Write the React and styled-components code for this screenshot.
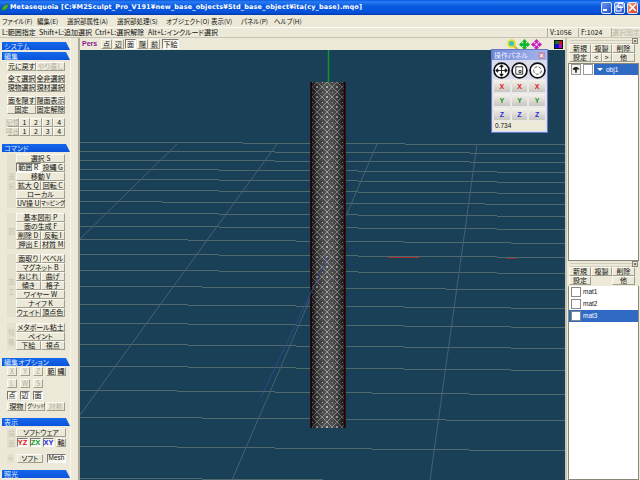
import React from 'react'
import styled, { createGlobalStyle } from 'styled-components'

const FONT = `"Noto Sans CJK JP", "Liberation Sans", sans-serif`

const GlobalStyle = createGlobalStyle`
  html, body { margin: 0; padding: 0; background: #ece9d8; }
  * { box-sizing: border-box; }
`

const MENU = ['ファイル(F)', '編集(E)', '選択部属性(A)', '選択部処理(S)', 'オブジェクト(O)', '表示(V)', 'パネル(P)', 'ヘルプ(H)']
const FLOOR_ROWS = [
  [142, 145], [151, 153.5], [160, 162.5], [169, 172.5], [179, 182.5], [190, 193.5], [201.5, 204.5],
  [213, 216.5], [226, 229.5], [239, 243.5], [254, 257.5], [270, 273.5], [286, 290], [304, 308.5],
  [323, 327.5], [344, 348.5], [366, 370.5], [390, 395], [417, 421], [446, 451], [478, 482],
]
const FLOOR_DIAGONALS = [
  [177, 144, 80, 239], [277, 144, 80, 415], [377, 144, 232, 480], [477, 144, 430, 480],
]
const ARROWS = 'M6 0l3 3H7.5v1.5H9V3l3 3-3 3V7.5H7.5V9H9l-3 3-3-3h1.5V7.5H3V9L0 6l3-3v1.5h1.5V3H3z'

const App = () => (
  <Screen>
    <GlobalStyle />
    <TitleBar>
      <AppIcon viewBox="0 0 12 12">
        <path d="M1 10 C2 4 6 1 11 1 C11 6 8 10 3 10 Z" fill="#4fae3a" stroke="#1c6a16" />
      </AppIcon>
      <TitleText>Metasequoia [C:¥M2Sculpt_Pro_V191¥new_base_objects¥Std_base_object¥ita(cy_base).mqo]</TitleText>
      <CaptionButton><svg width="9" height="9" viewBox="0 0 9 9"><rect x="1" y="6" width="4" height="2" fill="#fff" /></svg></CaptionButton>
      <CaptionButton><svg width="9" height="9" viewBox="0 0 9 9"><path d="M3 .5h5v4H3zM1 3h5v5H1z" fill="none" stroke="#fff" /></svg></CaptionButton>
      <CaptionButton $close><svg width="9" height="9" viewBox="0 0 9 9"><path d="M1 1l7 7M8 1l-7 7" stroke="#fff" strokeWidth="1.6" /></svg></CaptionButton>
    </TitleBar>

    <MenuBar>{MENU.map((m) => <span key={m}>{m}</span>)}</MenuBar>

    <InfoBar>
      <span>L:範囲指定</span>
      <span>Shift+L:追加選択</span>
      <span>Ctrl+L:選択解除</span>
      <span>Alt+L:インクルード選択</span>
      <Counters>
        <Counter $w={31}>V:1056</Counter>
        <Counter $w={33}>F:1024</Counter>
        <FixButton>選択固定</FixButton>
      </Counters>
    </InfoBar>

    <Main>
      <SideBar>
        <SideColumn>
          <Header>システム</Header>
          <Header $mt={2}>編集</Header>
          <Group $mt={2}>
            <Row><Btn>元に戻す</Btn><Btn $off>やり直し</Btn></Row>
          </Group>
          <Group $mt={3}>
            <Row><Btn>全て選択</Btn><Btn>全非選択</Btn></Row>
            <Row><Btn>現物選択</Btn><Btn>現材選択</Btn></Row>
          </Group>
          <Group $mt={4}>
            <Row><Btn>面を隠す</Btn><Btn>隠面表示</Btn></Row>
            <Row><Btn>固定</Btn><Btn>固定解除</Btn></Row>
          </Group>
          <Group $mt={4}>
            <NumRow>
              <Btn $off>記憶</Btn><Btn>1</Btn><Btn>2</Btn><Btn>3</Btn><Btn>4</Btn>
            </NumRow>
            <NumRow>
              <Btn $off>呼出</Btn><Btn>1</Btn><Btn>2</Btn><Btn>3</Btn><Btn>4</Btn>
            </NumRow>
          </Group>

          <Header $mt={8}>コマンド</Header>
          <Section $mt={2}>
            <Side>選<br />択</Side>
            <Stack>
              <Row><Btn>選択 S</Btn></Row>
              <Row><Btn $on>範囲 R</Btn><Btn>投縄 G</Btn></Row>
              <Row><Btn>移動 V</Btn></Row>
              <Row><Btn>拡大 Q</Btn><Btn>回転 C</Btn></Row>
              <Row><Btn>ローカル</Btn></Row>
              <Row><Btn>UV操 U</Btn><Btn $tiny>マッピング</Btn></Row>
            </Stack>
          </Section>
          <Section $mt={5}>
            <Side>図</Side>
            <Stack>
              <Row><Btn>基本図形 P</Btn></Row>
              <Row><Btn>面の生成 F</Btn></Row>
              <Row><Btn>削除 D</Btn><Btn>反転 I</Btn></Row>
              <Row><Btn>押出 E</Btn><Btn>材質 M</Btn></Row>
            </Stack>
          </Section>
          <Section $mt={5}>
            <Side>加<br />工</Side>
            <Stack>
              <Row><Btn>面取り</Btn><Btn>ベベル</Btn></Row>
              <Row><Btn>マグネット B</Btn></Row>
              <Row><Btn>ねじれ</Btn><Btn>曲げ</Btn></Row>
              <Row><Btn>傾き</Btn><Btn>格子</Btn></Row>
              <Row><Btn>ワイヤー W</Btn></Row>
              <Row><Btn>ナイフ K</Btn></Row>
              <Row><Btn>ウェイト</Btn><Btn>頂点色</Btn></Row>
            </Stack>
          </Section>
          <Section $mt={6}>
            <Side>特<br />殊</Side>
            <Stack>
              <Row><Btn>メタボール粘土</Btn></Row>
              <Row><Btn>ペイント</Btn></Row>
              <Row><Btn>下絵</Btn><Btn>視点</Btn></Row>
            </Stack>
          </Section>

          <Header $mt={8}>編集オプション</Header>
          <Options>
            <OptionRow>
              <Square $off>X</Square><Square $off>Y</Square><Square $off>Z</Square>
              <Square $joined>範</Square><Square $joined>縄</Square>
            </OptionRow>
            <OptionRow>
              <Square $off>L</Square><Square $off>W</Square><Square $off>S</Square>
            </OptionRow>
            <OptionRow>
              <Square $on>点</Square><Square $on>辺</Square><Square $on>面</Square>
            </OptionRow>
            <PairRow>
              <Btn>現物</Btn><Btn $tiny>グリッド</Btn><Btn $off>対称</Btn>
            </PairRow>
          </Options>

          <Header $mt={7}>表示</Header>
          <DisplayTop>
            <Side>描<br />画</Side>
            <Stack>
              <Row><Btn>ソフトウェア</Btn></Row>
              <AxisRow>
                <AxisBtn $c="#e0141c">YZ</AxisBtn>
                <AxisBtn $c="#129a2c">ZX</AxisBtn>
                <AxisBtn $c="#2424e0">XY</AxisBtn>
                <Square>軸</Square>
              </AxisRow>
            </Stack>
          </DisplayTop>
          <DisplayBottom>
            <Small>M</Small>
            <Btn>ソフト</Btn>
            <MeshBtn>Mesh</MeshBtn>
          </DisplayBottom>
          <Header $mt={7}>照光</Header>
        </SideColumn>
      </SideBar>

      <Center>
        <ViewBar>
          <PersLabel>Pers</PersLabel>
          <ViewBtn>点</ViewBtn>
          <ViewBtn>辺</ViewBtn>
          <ViewBtn $on>面</ViewBtn>
          <ViewBtn>隠</ViewBtn>
          <ViewBtn>前</ViewBtn>
          <ViewBtn $on $wide>下絵</ViewBtn>
          <ViewIcons>
            <svg width="11" height="11" viewBox="0 0 11 11">
              <circle cx="4.5" cy="4.5" r="3.4" fill="#39c0d0" stroke="#e0e020" strokeWidth="1.8" />
              <path d="M7 7l3.5 3.5" stroke="#d8b820" strokeWidth="2.2" />
            </svg>
            <svg width="11" height="11" viewBox="0 0 12 12"><path d={ARROWS} fill="#12b62a" /></svg>
            <svg width="11" height="11" viewBox="0 0 12 12">
              <path d={ARROWS} fill="#c81ec0" />
              <circle cx="6" cy="6" r="1.3" fill="#f0d8f0" />
            </svg>
            <Palette>
              <Cell $c="#0a7a2a" /><Cell $c="#d01010" /><Cell $c="#1010d8" /><Cell $c="#b010a0" />
            </Palette>
          </ViewIcons>
        </ViewBar>

        <Viewport>
          <Scene width="485" height="430" viewBox="80 50 485 430">
            <defs>
              <pattern id="lace" x="312" y="82" width="10" height="10" patternUnits="userSpaceOnUse">
                <rect width="10" height="10" fill="#282828" />
                <path d="M5 0L10 5L5 10L0 5Z" fill="none" stroke="#808080" strokeWidth="1" />
                <rect x="4" y="4" width="2" height="2" fill="#a0a0a0" />
                <rect x="0" y="0" width="1" height="1" fill="#a0a0a0" />
                <rect x="9" y="9" width="1" height="1" fill="#111" />
              </pattern>
              <linearGradient id="shine" x1="0" x2="1" y1="0" y2="0">
                <stop offset="0" stopColor="#000" stopOpacity=".4" />
                <stop offset=".5" stopColor="#fff" stopOpacity=".2" />
                <stop offset="1" stopColor="#000" stopOpacity=".4" />
              </linearGradient>
            </defs>
            <g shapeRendering="crispEdges">
              {FLOOR_ROWS.map(([a, b]) => (
                <line key={a} x1="80" y1={a} x2="565" y2={b} stroke="#50696a" />
              ))}
            </g>
            {FLOOR_DIAGONALS.map(([x1, y1, x2, y2]) => (
              <line key={x1} x1={x1} y1={y1} x2={x2} y2={y2} stroke="#42646c" />
            ))}
            <line x1="388" y1="257" x2="419" y2="257" stroke="#a82a2a" shapeRendering="crispEdges" />
            <line x1="506" y1="258" x2="517" y2="258" stroke="#8a2a3a" shapeRendering="crispEdges" />
            <line x1="328.5" y1="50" x2="328.5" y2="83" stroke="#0a9a2a" strokeWidth="1.4" />
            <rect x="310" y="82" width="36" height="346" fill="#120a0c" />
            <rect x="312" y="82" width="32" height="346" fill="url(#lace)" />
            <rect x="312" y="82" width="32" height="346" fill="url(#shine)" />
            <rect x="310" y="82" width="1" height="346" fill="#2c0a10" />
            <rect x="345" y="82" width="1" height="346" fill="#3c0a12" />
            <line x1="328" y1="257" x2="261" y2="397" stroke="#33488c" />
          </Scene>
        </Viewport>

        <OpPanel>
          <OpTitle>
            <span>操作パネル</span>
            <OpClose>×</OpClose>
          </OpTitle>
          <OpCircles>
            <OpCircle viewBox="0 0 16 16">
              <circle cx="8" cy="8" r="7" fill="#fff" stroke="#111" strokeWidth="1.6" />
              <path d="M8 3v10M3 8h10M8 2.5l-1.6 2h3.2zM8 13.5l-1.6-2h3.2zM2.5 8l2-1.6v3.2zM13.5 8l-2-1.6v3.2z" fill="#111" stroke="#111" strokeWidth=".8" />
            </OpCircle>
            <OpCircle viewBox="0 0 16 16">
              <circle cx="8" cy="8" r="7" fill="#fff" stroke="#111" strokeWidth="1.6" />
              <path d="M4.5 4.5h6.5v7h-6.5zM7.5 8h2v2h-2z" fill="none" stroke="#333" strokeWidth=".9" />
            </OpCircle>
            <OpCircle viewBox="0 0 16 16">
              <circle cx="8" cy="8" r="7" fill="#fff" stroke="#111" strokeWidth="1.6" />
              <circle cx="8" cy="8" r="3.6" fill="none" stroke="#555" strokeWidth=".9" strokeDasharray="3 1.4" />
            </OpCircle>
          </OpCircles>
          {[['X', '#e01818'], ['Y', '#189428'], ['Z', '#2a2ae0']].map(([axis, color]) => (
            <OpRow key={axis}>
              {[0, 1, 2].map((i) => <OpAxis key={i} $c={color}>{axis}</OpAxis>)}
            </OpRow>
          ))}
          <OpValue>0.734</OpValue>
        </OpPanel>
      </Center>

      <RightBar>
        <Grip><GripClose>×</GripClose></Grip>
        <RightButtons>
          <PanelBtn>新規</PanelBtn><PanelBtn>複製</PanelBtn><PanelBtn>削除</PanelBtn>
          <PanelBtn>設定</PanelBtn>
          <Arrows><PanelBtn>&lt;</PanelBtn><PanelBtn>&gt;</PanelBtn></Arrows>
          <PanelBtn>他</PanelBtn>
        </RightButtons>
        <ObjectList>
          <ObjectRow>
            <Eye viewBox="0 0 10 10">
              <path d="M1 4c2-3 6-3 8 0v1H6v4H4V6L1 5z" fill="#222" />
            </Eye>
            <Swatch />
            <ObjectName><Caret />obj1</ObjectName>
          </ObjectRow>
        </ObjectList>
        <Grip><GripClose>×</GripClose></Grip>
        <RightButtons>
          <PanelBtn>新規</PanelBtn><PanelBtn>複製</PanelBtn><PanelBtn>削除</PanelBtn>
          <PanelBtn>設定</PanelBtn>
          <PanelBtn $blank />
          <PanelBtn>他</PanelBtn>
        </RightButtons>
        <MaterialList>
          <MaterialRow><MatSwatch />mat1</MaterialRow>
          <MaterialRow><MatSwatch />mat2</MaterialRow>
          <MaterialRow $sel><MatSwatch />mat3</MaterialRow>
        </MaterialList>
      </RightBar>
    </Main>
  </Screen>
)

export default App

const raised = '#fbfaf4 #a09d8c #a09d8c #fbfaf4'
const sunken = '#777 #fff #fff #777'

const Screen = styled.div`
  width: 640px;
  height: 480px;
  overflow: hidden;
  display: flex;
  flex-direction: column;
  background: #ece9d8;
  font-family: ${FONT};
  font-feature-settings: "palt";
  color: #111;
`
const TitleBar = styled.div`
  height: 15px;
  flex: none;
  display: flex;
  align-items: center;
  padding: 0 2px 0 1px;
  gap: 2px;
  background: linear-gradient(#0a58e4 0%, #2a7cf2 12%, #0a5ae0 40%, #0450d8 85%, #0338a8 100%);
`
const AppIcon = styled.svg`
  width: 8px;
  height: 11px;
  margin-right: -1px;
  flex: none;
`
const TitleText = styled.div`
  flex: 1;
  color: #fff;
  font: bold 6.5px/15px "DejaVu Sans", sans-serif;
  letter-spacing: 0.15px;
  white-space: nowrap;
`
const CaptionButton = styled.div`
  width: 11px;
  height: 12px;
  flex: none;
  display: flex;
  align-items: center;
  justify-content: center;
  border: 1px solid #dce6f8;
  border-radius: 2px;
  background: ${(p) => (p.$close ? 'linear-gradient(135deg, #f0a080, #d83c10)' : 'linear-gradient(135deg, #6a94ee, #2450c8)')};
`
const MenuBar = styled.div`
  height: 12px;
  flex: none;
  display: grid;
  grid-template-columns: 35px 30px 50px 49px 45px 30px 33px auto;
  align-items: center;
  padding-left: 2px;
  font-size: 6.5px;
  line-height: 12px;
  white-space: nowrap;
`
const InfoBar = styled.div`
  height: 11px;
  flex: none;
  display: grid;
  grid-template-columns: 37px 56px 53px 1fr auto;
  align-items: center;
  padding-left: 2px;
  font-size: 7px;
  line-height: 9px;
  white-space: nowrap;
  border-top: 1px solid #fbfaf4;
  border-bottom: 1px solid #c8c5b4;
`
const Counters = styled.div`
  display: flex;
  align-items: stretch;
  height: 9px;
`
const Counter = styled.span`
  width: ${(p) => p.$w}px;
  padding-left: 2px;
  border-left: 1px solid #b0ad9c;
`
const FixButton = styled.span`
  width: 29px;
  color: #b8b5a4;
  text-align: center;
  border-left: 1px solid #b0ad9c;
`
const Main = styled.div`
  flex: 1;
  min-height: 0;
  display: flex;
`
const SideBar = styled.div`
  width: 80px;
  flex: none;
  border-right: 2px solid #aca899;
  overflow: hidden;
`
const SideColumn = styled.div`
  width: 71px;
  height: 100%;
  display: flex;
  flex-direction: column;
  padding: 4px 0 0 2px;
  border-right: 1px solid #f8f6ee;
`
const Header = styled.div`
  width: 68px;
  height: 8px;
  flex: none;
  margin-top: ${(p) => p.$mt || 0}px;
  padding-left: 2px;
  font-size: 7px;
  line-height: 8px;
  color: #dbe8ff;
  white-space: nowrap;
  background: linear-gradient(#1468ec, #0a54dc);
  clip-path: polygon(0 0, calc(100% - 4px) 0, 100% 100%, 0 100%);
`
const Group = styled.div`
  display: flex;
  flex-direction: column;
  margin: ${(p) => p.$mt}px 0 0 5px;
  width: 58px;
`
const Row = styled.div`
  display: flex;
  height: 9px;
  flex: none;
`
const NumRow = styled(Row)`
  & > * { flex: none; width: 9px; }
  & > *:first-child { width: 22px; }
`
const Btn = styled.div`
  flex: 1 1 0;
  min-width: 0;
  height: 9px;
  display: flex;
  align-items: center;
  justify-content: center;
  font-size: ${(p) => (p.$tiny ? '5.4px' : '7px')};
  line-height: 1;
  white-space: nowrap;
  color: ${(p) => (p.$off ? '#b0ad9c' : '#111')};
  background: ${(p) => (p.$on ? '#f8f6ee' : '#ece9d8')};
  border: 1px solid;
  border-color: ${(p) => (p.$on ? sunken : raised)};
`
const Section = styled.div`
  display: flex;
  margin: ${(p) => p.$mt}px 0 0 5px;
  width: 58px;
`
const Side = styled.div`
  width: 9px;
  flex: none;
  display: flex;
  flex-direction: column;
  align-items: center;
  justify-content: center;
  text-align: center;
  font-size: 6.5px;
  line-height: 10px;
  color: #c4c1b0;
  background: #e4e1d0;
  & > br { display: none; }
`
const Stack = styled.div`
  flex: 1;
  min-width: 0;
  display: flex;
  flex-direction: column;
`
const Options = styled.div`
  display: flex;
  flex-direction: column;
  margin: 1px 0 0 5px;
  width: 58px;
  gap: 3px;
`
const OptionRow = styled.div`
  display: flex;
  height: 9px;
  gap: 3px;
`
const PairRow = styled(Row)`
  margin-top: -1px;
  gap: 1px;
`
const Square = styled.div`
  width: 10px;
  height: 9px;
  flex: none;
  display: flex;
  align-items: center;
  justify-content: center;
  font-size: 7px;
  line-height: 1;
  margin-right: ${(p) => (p.$joined ? '-3px' : '0')};
  color: ${(p) => (p.$off ? '#b0ad9c' : '#111')};
  background: ${(p) => (p.$on ? '#f8f6ee' : '#ece9d8')};
  border: 1px solid;
  border-color: ${(p) => (p.$on ? sunken : raised)};
`
const DisplayTop = styled.div`
  display: flex;
  margin: 2px 0 0 5px;
  width: 59px;
`
const AxisRow = styled.div`
  display: flex;
  gap: 2px;
  height: 9px;
  margin: 1px 0 0 1px;
`
const AxisBtn = styled.div`
  width: 11px;
  height: 9px;
  flex: none;
  display: flex;
  align-items: center;
  justify-content: center;
  font: bold 7.5px/1 "Liberation Sans", sans-serif;
  color: ${(p) => p.$c};
  background: #f6f4ec;
  border: 1px solid;
  border-color: ${sunken};
`
const DisplayBottom = styled.div`
  display: flex;
  align-items: center;
  gap: 3px;
  margin: 6px 0 0 5px;
  width: 59px;
`
const Small = styled.div`
  width: 7px;
  height: 9px;
  flex: none;
  font-size: 5px;
  line-height: 9px;
  text-align: center;
  color: #c4c1b0;
  background: #e4e1d0;
`
const MeshBtn = styled.div`
  width: 19px;
  height: 9px;
  flex: none;
  display: flex;
  align-items: center;
  justify-content: center;
  margin-left: 1px;
  font: 6.5px/1 "Liberation Sans", sans-serif;
  background: #f8f6ee;
  border: 1px solid;
  border-color: ${sunken};
`
const Center = styled.div`
  flex: 1;
  min-width: 0;
  position: relative;
  display: flex;
  flex-direction: column;
`
const ViewBar = styled.div`
  height: 12px;
  flex: none;
  display: flex;
  align-items: center;
  padding-left: 2px;
  gap: 1px;
`
const PersLabel = styled.span`
  width: 18px;
  font: bold 7px/12px "Liberation Sans", sans-serif;
  color: #8a1a8a;
`
const ViewBtn = styled.div`
  width: ${(p) => (p.$wide ? '17px' : '11px')};
  margin-left: ${(p) => (p.$wide ? '1px' : '0')};
  height: 10px;
  flex: none;
  display: flex;
  align-items: center;
  justify-content: center;
  font-size: 7px;
  line-height: 1;
  white-space: nowrap;
  background: ${(p) => (p.$on ? '#f8f6ee' : '#ece9d8')};
  border: 1px solid;
  border-color: ${(p) => (p.$on ? sunken : raised)};
`
const ViewIcons = styled.div`
  margin-left: auto;
  margin-right: 2px;
  display: flex;
  align-items: center;
  gap: 1px;
`
const Palette = styled.div`
  width: 9px;
  height: 9px;
  margin-left: 11px;
  display: grid;
  grid-template-columns: 1fr 1fr;
  grid-template-rows: 1fr 1fr;
  border: 1px solid #111;
`
const Cell = styled.span`
  display: block;
  background: ${(p) => p.$c};
`
const Viewport = styled.div`
  flex: 1;
  background: #1a4058;
  overflow: hidden;
`
const Scene = styled.svg`
  display: block;
`
const OpPanel = styled.div`
  position: absolute;
  left: 411px;
  top: 11px;
  width: 57px;
  height: 84px;
  border: 1px solid #6878c8;
  background: #d8dcec;
  display: flex;
  flex-direction: column;
`
const OpTitle = styled.div`
  height: 10px;
  flex: none;
  display: flex;
  align-items: center;
  justify-content: space-between;
  padding: 0 2px;
  font-size: 7px;
  line-height: 10px;
  color: #f0f0ff;
  background: linear-gradient(90deg, #6f86d8, #a8b8ec);
`
const OpClose = styled.span`
  width: 7px;
  height: 7px;
  font: bold 7px/7px "Liberation Sans", sans-serif;
  text-align: center;
  color: #fff;
  background: #c090b0;
`
const OpCircles = styled.div`
  display: flex;
  justify-content: space-between;
  align-items: center;
  height: 19px;
  flex: none;
  padding: 1px 1px 0;
`
const OpCircle = styled.svg`
  width: 17px;
  height: 17px;
`
const OpRow = styled.div`
  display: grid;
  grid-template-columns: repeat(3, 1fr);
  height: 14px;
  flex: none;
  padding: 0 1px;
`
const OpAxis = styled.div`
  display: flex;
  align-items: center;
  justify-content: center;
  font: bold 7px/1 "Liberation Sans", sans-serif;
  color: ${(p) => p.$c};
  background: linear-gradient(#f4f2ea, #c8c6c0);
  border: 1px solid #e8e8e8;
`
const OpValue = styled.div`
  height: 10px;
  margin: 0 1px;
  padding-left: 2px;
  font: 6.5px/10px "Liberation Sans", sans-serif;
  background: #ece9d8;
`
const RightBar = styled.div`
  width: 75px;
  flex: none;
  display: flex;
  flex-direction: column;
  border-left: 2px solid #c8c5b4;
`
const Grip = styled.div`
  height: 6px;
  flex: none;
  position: relative;
  margin: 0 2px 0 3px;
  background: repeating-linear-gradient(#ece9d8 0 2px, #d0cdbc 2px 3px);
`
const GripClose = styled.span`
  position: absolute;
  right: 0;
  top: 0;
  width: 6px;
  height: 6px;
  font: 6px/5px "Liberation Sans", sans-serif;
  text-align: center;
  border: 1px solid #8a8778;
  background: #ece9d8;
`
const RightButtons = styled.div`
  display: grid;
  grid-template-columns: 22px 21px 23px;
  grid-auto-rows: 9px;
  margin: 0 0 1px 2px;
`
const Arrows = styled.div`
  display: grid;
  grid-template-columns: 1fr 1fr;
`
const PanelBtn = styled.div`
  display: flex;
  align-items: center;
  justify-content: center;
  font-size: 7px;
  line-height: 1;
  white-space: nowrap;
  background: #ece9d8;
  border: 1px solid;
  border-color: ${(p) => (p.$blank ? '#ece9d8' : raised)};
`
const ObjectList = styled.div`
  height: 198px;
  flex: none;
  margin: 0 1px;
  background: #fff;
  border: 1px solid #8a8778;
`
const ObjectRow = styled.div`
  display: flex;
  align-items: center;
  height: 11px;
  padding-left: 2px;
`
const Eye = styled.svg`
  width: 10px;
  height: 11px;
  flex: none;
  background: #f4f2ea;
  border: 1px solid #999;
`
const Swatch = styled.div`
  width: 10px;
  height: 11px;
  flex: none;
  margin: 0 1px 0 2px;
  background: #fff;
  border: 1px solid #999;
`
const ObjectName = styled.div`
  flex: 1;
  height: 11px;
  display: flex;
  align-items: center;
  gap: 3px;
  padding-left: 3px;
  color: #fff;
  font: 6.5px/11px "Liberation Sans", sans-serif;
  background: #316ac5;
`
const Caret = styled.span`
  width: 0;
  height: 0;
  border-left: 3px solid transparent;
  border-right: 3px solid transparent;
  border-top: 3px solid #fff;
`
const MaterialList = styled.div`
  flex: 1;
  margin: 0 1px;
  background: #fff;
  border: 1px solid #8a8778;
  border-top: none;
`
const MaterialRow = styled.div`
  display: flex;
  align-items: center;
  gap: 2px;
  height: 12px;
  padding-left: 2px;
  font: 6.5px/12px "Liberation Sans", sans-serif;
  color: ${(p) => (p.$sel ? '#fff' : '#111')};
  background: ${(p) => (p.$sel ? '#316ac5' : '#fff')};
`
const MatSwatch = styled.span`
  width: 10px;
  height: 10px;
  flex: none;
  background: #fff;
  border: 1px solid #888;
`
